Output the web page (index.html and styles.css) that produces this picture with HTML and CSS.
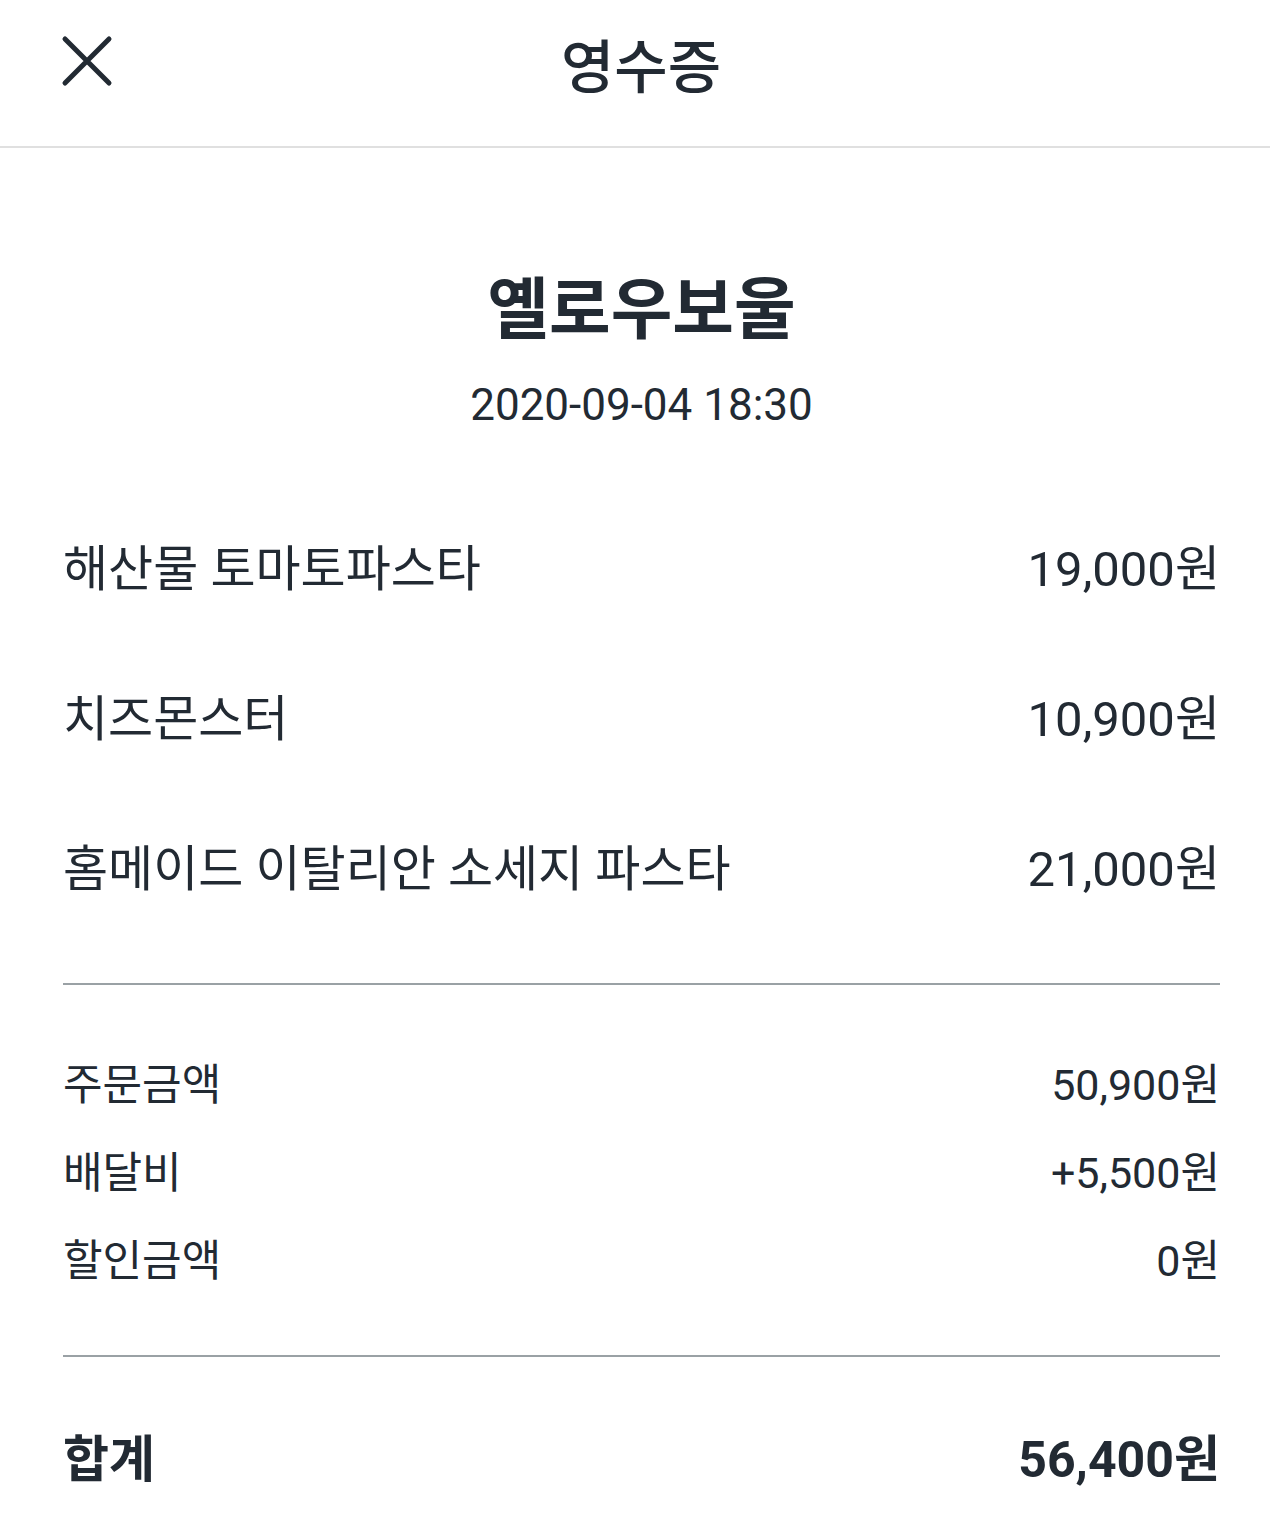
FILE: index.html
```html
<!DOCTYPE html>
<html lang="ko">
<head>
<meta charset="utf-8">
<title>영수증</title>
<link rel="stylesheet" href="styles.css">
</head>
<body>
<header class="topbar">
  <button class="close" aria-label="닫기">
    <svg width="52" height="52" viewBox="0 0 52 52"><path d="M4 4 L48 48 M48 4 L4 48" stroke="#222a33" stroke-width="5" stroke-linecap="round" fill="none"/></svg>
  </button>
  <h1 class="topbar-title">영수증</h1>
</header>
<main class="receipt">
  <section class="store">
    <h2 class="store-name">옐로우보울</h2>
    <p class="store-date">2020-09-04 18:30</p>
  </section>
  <ul class="items">
    <li class="item"><span>해산물 토마토파스타</span><span>19,000원</span></li>
    <li class="item"><span>치즈몬스터</span><span>10,900원</span></li>
    <li class="item"><span>홈메이드 이탈리안 소세지 파스타</span><span>21,000원</span></li>
  </ul>
  <ul class="summary">
    <li class="sum-row"><span>주문금액</span><span>50,900원</span></li>
    <li class="sum-row"><span>배달비</span><span>+5,500원</span></li>
    <li class="sum-row"><span>할인금액</span><span>0원</span></li>
  </ul>
  <div class="total"><span>합계</span><span>56,400원</span></div>
</main>
</body>
</html>
```

FILE: styles.css
```css
* { box-sizing: border-box; }
html, body { margin: 0; padding: 0; background: #fff; }
body {
  font-family: Roboto, "Noto Sans CJK KR", sans-serif;
  color: #222a33;
  width: 1270px;
}
.topbar {
  position: relative;
  height: 148px;
  border-bottom: 2px solid #e0e0e0;
  display: flex;
  align-items: center;
  justify-content: center;
}
.close {
  position: absolute;
  left: 61px;
  top: 35px;
  padding: 0;
  border: 0;
  background: none;
  width: 52px;
  height: 52px;
}
.close svg { display: block; }
.topbar-title {
  margin: 0;
  margin-top: -10px;
  font-size: 58px;
  font-weight: 500;
  line-height: 1;
  padding-left: 12px;
}
.receipt {
  padding: 0 50px 0 63px;
}
.store {
  text-align: center;
  padding-top: 122px;
}
.store-name {
  margin: 0;
  font-size: 67px;
  font-weight: 700;
  line-height: 80px;
}
.store-date {
  margin: 25px 0 0;
  font-size: 44px;
  line-height: 60px;
}
.items {
  list-style: none;
  margin: 54px 0 0;
  padding: 0 0 44px;
  border-bottom: 2px solid #9aa1a5;
}
.item {
  height: 150px;
  display: flex;
  justify-content: space-between;
  align-items: center;
  font-size: 49px;
}
.summary {
  list-style: none;
  margin: 0;
  padding: 52px 0 54px;
  border-bottom: 2px solid #9aa1a5;
}
.sum-row {
  height: 88px;
  display: flex;
  justify-content: space-between;
  align-items: center;
  font-size: 43px;
}
.total {
  margin-top: 48px;
  height: 100px;
  display: flex;
  justify-content: space-between;
  align-items: center;
  font-size: 50px;
  font-weight: 700;
}
```
